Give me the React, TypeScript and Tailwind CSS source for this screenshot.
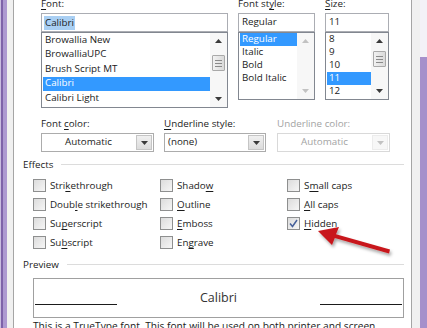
import React from "react";

const Acc = ({ text, i }: { text: string; i?: number }) => {
    if (i === undefined) return <>{text}</>;
    return (
        <>
            {text.slice(0, i)}
            <span className="underline underline-offset-[1.5px]">{text[i]}</span>
            {text.slice(i + 1)}
        </>
    );
};

function Label({ text, i, disabled }: { text: string; i?: number; disabled?: boolean }) {
    return (
        <div className={`h-[17px] leading-[15px] ${disabled ? "text-[#a3a3a3]" : ""}`}>
            <Acc text={text} i={i} />
        </div>
    );
}

function Arrow({ up, light }: { up?: boolean; light?: boolean }) {
    return (
        <svg width="7" height="4" viewBox="0 0 7 4">
            <polygon points={up ? "0,4 7,4 3.5,0" : "0,0 7,0 3.5,4"} fill={light ? "#c2c2c2" : "#3a3a3a"} />
        </svg>
    );
}

function Scrollbar({ thumbTop, light }: { thumbTop?: number; light?: boolean }) {
    return (
        <div className="w-[17px] h-full bg-[#f7f7f7] relative flex flex-col items-center justify-between py-[6px]">
            <Arrow up light={light} />
            {thumbTop !== undefined && (
                <div
                    className="absolute left-[2px] w-[13px] h-[16px] border border-[#a9a9a9] bg-gradient-to-r from-[#f1f1f1] to-[#dadada] rounded-[1px] flex flex-col items-center justify-center gap-[2px]"
                    style={{ top: thumbTop }}
                >
                    <div className="w-[7px] h-px bg-[#8a8a8a]" />
                    <div className="w-[7px] h-px bg-[#8a8a8a]" />
                    <div className="w-[7px] h-px bg-[#8a8a8a]" />
                </div>
            )}
            <Arrow light={light} />
        </div>
    );
}

function ListBox({ items, selected, rowH, height, thumbTop, light }: {
    items: string[]; selected: number; rowH: string; height: string; thumbTop?: number; light?: boolean;
}) {
    return (
        <div className={`${height} border border-[#828790] flex bg-white`}>
            <div className="flex-1 pl-px overflow-hidden">
                {items.map((t, k) => (
                    <div
                        key={t}
                        className={`${rowH} flex items-center px-[2px] ${k === selected ? "bg-[#3399ff] text-white" : ""}`}
                    >
                        {t}
                    </div>
                ))}
            </div>
            <Scrollbar thumbTop={thumbTop} light={light} />
        </div>
    );
}

function Dropdown({ value, width, center, disabled }: { value: string; width: string; center?: boolean; disabled?: boolean }) {
    return (
        <div className={`${width} h-[19px] border ${disabled ? "border-[#d9d9d9]" : "border-[#acacac]"} flex bg-white`}>
            <div className={`flex-1 flex items-center px-[3px] ${center ? "justify-center" : ""} ${disabled ? "text-[#a3a3a3]" : ""}`}>
                {value}
            </div>
            <div className={`w-[16px] m-px flex items-center justify-center border ${disabled ? "border-[#ececec] bg-[#f7f7f7]" : "border-[#c5c5c5] bg-gradient-to-b from-[#f0f0f0] to-[#dcdcdc]"}`}>
                <Arrow light={disabled} />
            </div>
        </div>
    );
}

function Check({ label, i, checked }: { label: string; i: number; checked?: boolean }) {
    return (
        <div className="h-[19px] flex items-center">
            <div className="w-[13px] h-[13px] border border-[#8e8f8f] bg-gradient-to-br from-[#dcdcdc] to-[#f6f6f6] flex items-center justify-center">
                {checked && (
                    <svg width="9" height="9" viewBox="0 0 9 9">
                        <polyline points="1,4.5 3.5,7.5 8,1" fill="none" stroke="#46609a" strokeWidth="1.5" />
                    </svg>
                )}
            </div>
            <div className="ml-[4px] leading-[15px]">
                <Acc text={label} i={i} />
            </div>
        </div>
    );
}

function GroupTitle({ title }: { title: string }) {
    return (
        <div className="flex items-center h-[15px] leading-[15px]">
            <span>{title}</span>
            <div className="flex-1 h-px bg-[#dcdcdc] ml-[8px]" />
        </div>
    );
}

export default function App() {
    return (
        <div className="w-[427px] h-[328px] overflow-hidden relative bg-white flex font-['Open_Sans',sans-serif] text-[9.8px] text-[#1b1b1b]">
            {/* left window frame */}
            <div className="flex shrink-0">
                <div className="w-px bg-[#c9bce0]" />
                <div className="w-[2px] bg-[#7d62a9]" />
                <div className="w-[4px] bg-[#ad99d1]" />
                <div className="w-[6px] bg-[#f0f0f0]" />
                <div className="w-px bg-[#a5a5a5]" />
            </div>

            <div className="flex-1 min-w-0">
                {/* font / style / size */}
                <div className="flex gap-[10px] pl-[27px] -mt-[4px]">
                    <div className="w-[187px]">
                        <Label text="Font:" i={0} />
                        <div className="h-[19px] border border-[#abadb3] flex items-center px-[2px]">
                            <span className="bg-[#a9cff3] px-px leading-[14px]">Calibri</span>
                        </div>
                        <ListBox
                            items={["Browallia New", "BrowalliaUPC", "Brush Script MT", "Calibri", "Calibri Light"]}
                            selected={3}
                            rowH="h-[14.5px]"
                            height="h-[76px]"
                            thumbTop={22}
                        />
                    </div>
                    <div className="w-[77px]">
                        <Label text="Font style:" i={7} />
                        <div className="h-[19px] border border-[#abadb3] flex items-center px-[3px]">Regular</div>
                        <ListBox
                            items={["Regular", "Italic", "Bold", "Bold Italic"]}
                            selected={0}
                            rowH="h-[13px]"
                            height="h-[68px]"
                            light
                        />
                    </div>
                    <div className="w-[64px]">
                        <Label text="Size:" i={0} />
                        <div className="h-[19px] border border-[#abadb3] flex items-center px-[3px]">11</div>
                        <ListBox
                            items={["8", "9", "10", "11", "12"]}
                            selected={3}
                            rowH="h-[13px]"
                            height="h-[68px]"
                            thumbTop={18}
                        />
                    </div>
                </div>

                {/* color / underline */}
                <div className="flex pl-[27px] mt-[8px]">
                    <div className="w-[113px]">
                        <Label text="Font color:" i={5} />
                        <Dropdown value="Automatic" width="w-[113px]" center />
                    </div>
                    <div className="w-[102px] ml-[10px]">
                        <Label text="Underline style:" i={0} />
                        <Dropdown value="(none)" width="w-[102px]" />
                    </div>
                    <div className="w-[113px] ml-[11px]">
                        <Label text="Underline color:" disabled />
                        <Dropdown value="Automatic" width="w-[113px]" center disabled />
                    </div>
                </div>

                {/* effects */}
                <div className="pl-[9px] pr-[7px] mt-[5px]">
                    <GroupTitle title="Effects" />
                </div>
                <div className="grid grid-cols-[127px_127px_1fr] grid-rows-4 grid-flow-col pl-[19px] mt-[4px]">
                    <Check label="Strikethrough" i={4} />
                    <Check label="Double strikethrough" i={4} />
                    <Check label="Superscript" i={2} />
                    <Check label="Subscript" i={2} />
                    <Check label="Shadow" i={5} />
                    <Check label="Outline" i={0} />
                    <Check label="Emboss" i={0} />
                    <Check label="Engrave" i={2} />
                    <Check label="Small caps" i={1} />
                    <Check label="All caps" i={0} />
                    <Check label="Hidden" i={0} checked />
                </div>

                {/* preview */}
                <div className="pl-[9px] pr-[7px] mt-[5px]">
                    <GroupTitle title="Preview" />
                </div>
                <div className="ml-[19px] w-[371px] h-[40px] mt-[6px] border border-[#a0a0a0] flex items-center px-px">
                    <div className="w-[82px] h-px bg-[#1b1b1b] mt-[12px]" />
                    <div className="flex-1 text-center text-[12.5px] text-[#333]">Calibri</div>
                    <div className="w-[82px] h-px bg-[#1b1b1b] mt-[12px]" />
                </div>
                <div className="pl-[19px] leading-[15px] mt-[1px] text-[10.2px] whitespace-nowrap">
                    This is a TrueType font. This font will be used on both printer and screen.
                </div>
            </div>

            {/* right window frame */}
            <div className="flex shrink-0">
                <div className="w-px bg-[#a5a5a5]" />
                <div className="w-[8px] bg-[#f0f0f0]" />
                <div className="w-[7px] flex flex-col">
                    <div className="h-[57px] bg-[#f3f1f7]" />
                    <div className="flex-1 bg-[#a690cb]" />
                </div>
            </div>

            {/* red annotation arrow */}
            <svg className="absolute inset-0 pointer-events-none" width="427" height="328" viewBox="0 0 427 328">
                <defs>
                    <filter id="sh" x="-20%" y="-20%" width="140%" height="160%">
                        <feDropShadow dx="1.5" dy="2.5" stdDeviation="1.6" floodColor="#000" floodOpacity="0.35" />
                    </filter>
                </defs>
                <g filter="url(#sh)" fill="#c8171b">
                    <polygon points="318,231 339,227 336,234.3 390,249.5 389,253.5 334.8,238 332,245" />
                </g>
            </svg>
        </div>
    );
}
